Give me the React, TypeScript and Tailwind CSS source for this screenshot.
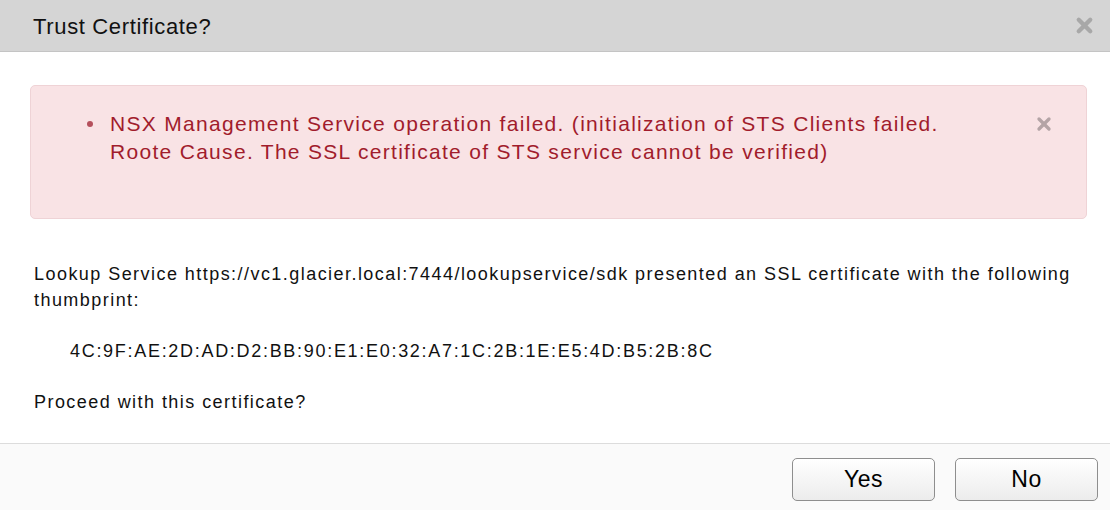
import { X } from "lucide-react";

export default function App() {
  return (
    <div className="flex h-[510px] w-[1110px] flex-col overflow-hidden bg-white font-['Liberation_Sans',Arial,sans-serif] text-[#111]">
      {/* Header */}
      <div className="flex h-[52px] shrink-0 items-center justify-between border-b border-[#c4c4c4] bg-[#d5d5d5] pl-[33px] pr-[14px]">
        <h1 className="pt-[2px] text-[22px] leading-none tracking-[0.65px]">Trust Certificate?</h1>
        <X className="h-[23px] w-[23px] text-[#a8a8a8]" strokeWidth={4.5} />
      </div>

      {/* Body */}
      <div className="flex flex-1 flex-col pl-[30px] pr-[23px] pt-[33px]">
        <div className="flex h-[134px] items-start justify-between rounded-[5px] border border-[#efd3d6] bg-[#f9e3e5] pl-[56px] pr-[32px] pt-[24px]">
          <div className="flex items-start gap-[17px] text-[21px] leading-[28px] tracking-[1.3px] text-[#a11c2c]">
            <span className="mt-[11px] h-[6px] w-[6px] shrink-0 rounded-full bg-[#b5505c]" />
            <p>
              NSX Management Service operation failed. (initialization of STS Clients failed.
              <br />
              Roote Cause. The SSL certificate of STS service cannot be verified)
            </p>
          </div>
          <X className="mt-[4px] h-[20px] w-[20px] text-[#b4a4a6]" strokeWidth={4} />
        </div>

        <p className="mt-[42px] pl-[4px] text-[18px] leading-[26px] tracking-[1.45px]">
          Lookup Service https://vc1.glacier.local:7444/lookupservice/sdk presented an SSL certificate with the following
          <br />
          thumbprint:
        </p>
        <p className="mt-[25px] pl-[40px] text-[18px] leading-[26px] tracking-[1.7px]">
          4C:9F:AE:2D:AD:D2:BB:90:E1:E0:32:A7:1C:2B:1E:E5:4D:B5:2B:8C
        </p>
        <p className="mt-[25px] pl-[4px] text-[18px] leading-[26px] tracking-[1.45px]">Proceed with this certificate?</p>
      </div>

      {/* Footer */}
      <div className="flex h-[67px] shrink-0 items-start justify-end gap-[20px] border-t border-[#dcdcdc] bg-[#fafafa] pr-[12px] pt-[14px]">
        <button className="h-[43px] w-[143px] rounded-[5px] border border-[#8e8e8e] bg-gradient-to-b from-white to-[#ececec] text-[23px] tracking-[0.5px] text-black">
          Yes
        </button>
        <button className="h-[43px] w-[143px] rounded-[5px] border border-[#8e8e8e] bg-gradient-to-b from-white to-[#ececec] text-[23px] tracking-[0.5px] text-black">
          No
        </button>
      </div>
    </div>
  );
}
